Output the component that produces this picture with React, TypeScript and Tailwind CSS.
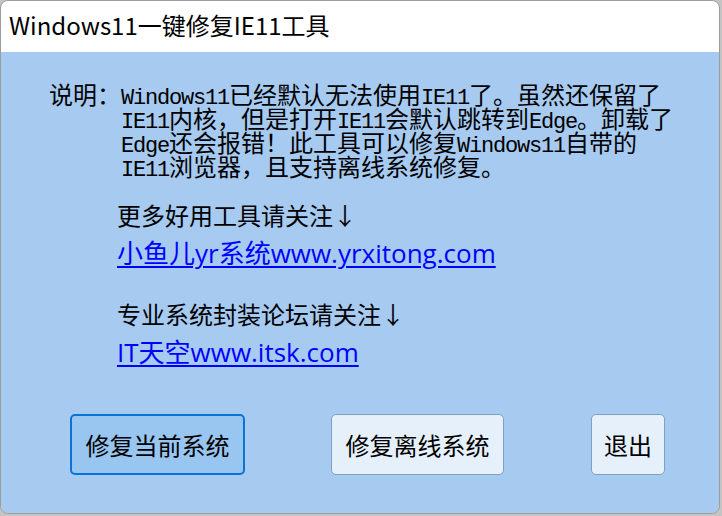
const CJK = '"Noto Sans CJK SC", sans-serif';

// half-width latin bits of the pixel-font paragraph
const M = ({ children }: { children: string }) => (
  <span className="font-['Liberation_Mono',monospace] text-[22px] leading-[0] tracking-[-1.2px]">{children}</span>
);

const Link = ({ children }: { children: React.ReactNode }) => (
  <a
    href="#"
    className="block w-fit text-[26px] leading-[28px] text-[#0000ff] underline decoration-2 underline-offset-[3px] font-['Open_Sans','Noto_Sans_CJK_SC',sans-serif]"
  >
    {children}
  </a>
);

const BUTTONS = [
  { label: '修复当前系统', w: 'w-[175px]', ml: '', active: true },
  { label: '修复离线系统', w: 'w-[173px]', ml: 'ml-[86px]', active: false },
  { label: '退出', w: 'w-[74px]', ml: 'ml-[87px]', active: false },
];

export default function App() {
  return (
    <div className="w-[722px] h-[516px] bg-[#c4c4c4] overflow-hidden" style={{ fontFamily: CJK }}>
      <div className="w-[720px] h-[514px] rounded-[8px] border border-[#9d9d9d] overflow-hidden flex flex-col">
        <header className="h-[51px] shrink-0 bg-white pl-[8px] pt-[12px] text-[24px] leading-[24px] text-black">
          Windows11一键修复IE11工具
        </header>

        <main className="flex-1 bg-[#a6caf0] text-black">
          <section className="flex pl-[48px] pt-[30px] text-[24px] leading-[24px] whitespace-nowrap">
            <span>说明：</span>
            <p>
              <M>Windows11</M>已经默认无法使用<M>IE11</M>了。虽然还保留了
              <br />
              <M>IE11</M>内核，但是打开<M>IE11</M>会默认跳转到<M>Edge</M>。卸载了
              <br />
              <M>Edge</M>还会报错！此工具可以修复<M>Windows11</M>自带的
              <br />
              <M>IE11</M>浏览器，且支持离线系统修复。
            </p>
          </section>

          <section className="pl-[116px] whitespace-nowrap">
            <p className="mt-[25px] text-[24px] leading-[24px]">更多好用工具请关注↓</p>
            <div className="mt-[12px]">
              <Link>小鱼儿yr系统www.yrxitong.com</Link>
            </div>
            <p className="mt-[35px] text-[24px] leading-[24px]">专业系统封装论坛请关注↓</p>
            <div className="mt-[12px]">
              <Link>IT天空www.itsk.com</Link>
            </div>
          </section>

          <div className="flex pl-[69px] mt-[48px]">
            {BUTTONS.map((b) => (
              <button
                key={b.label}
                className={`${b.w} ${b.ml} h-[61px] flex items-center justify-center text-[24px] leading-[24px] text-black ${
                  b.active
                    ? 'bg-[#98c6f1] border-2 border-[#0a74d6] rounded-[5px]'
                    : 'bg-[#e6f0fb] border border-[#7f9fc4] rounded-[5px]'
                }`}
              >
                {b.label}
              </button>
            ))}
          </div>
        </main>
      </div>
    </div>
  );
}
